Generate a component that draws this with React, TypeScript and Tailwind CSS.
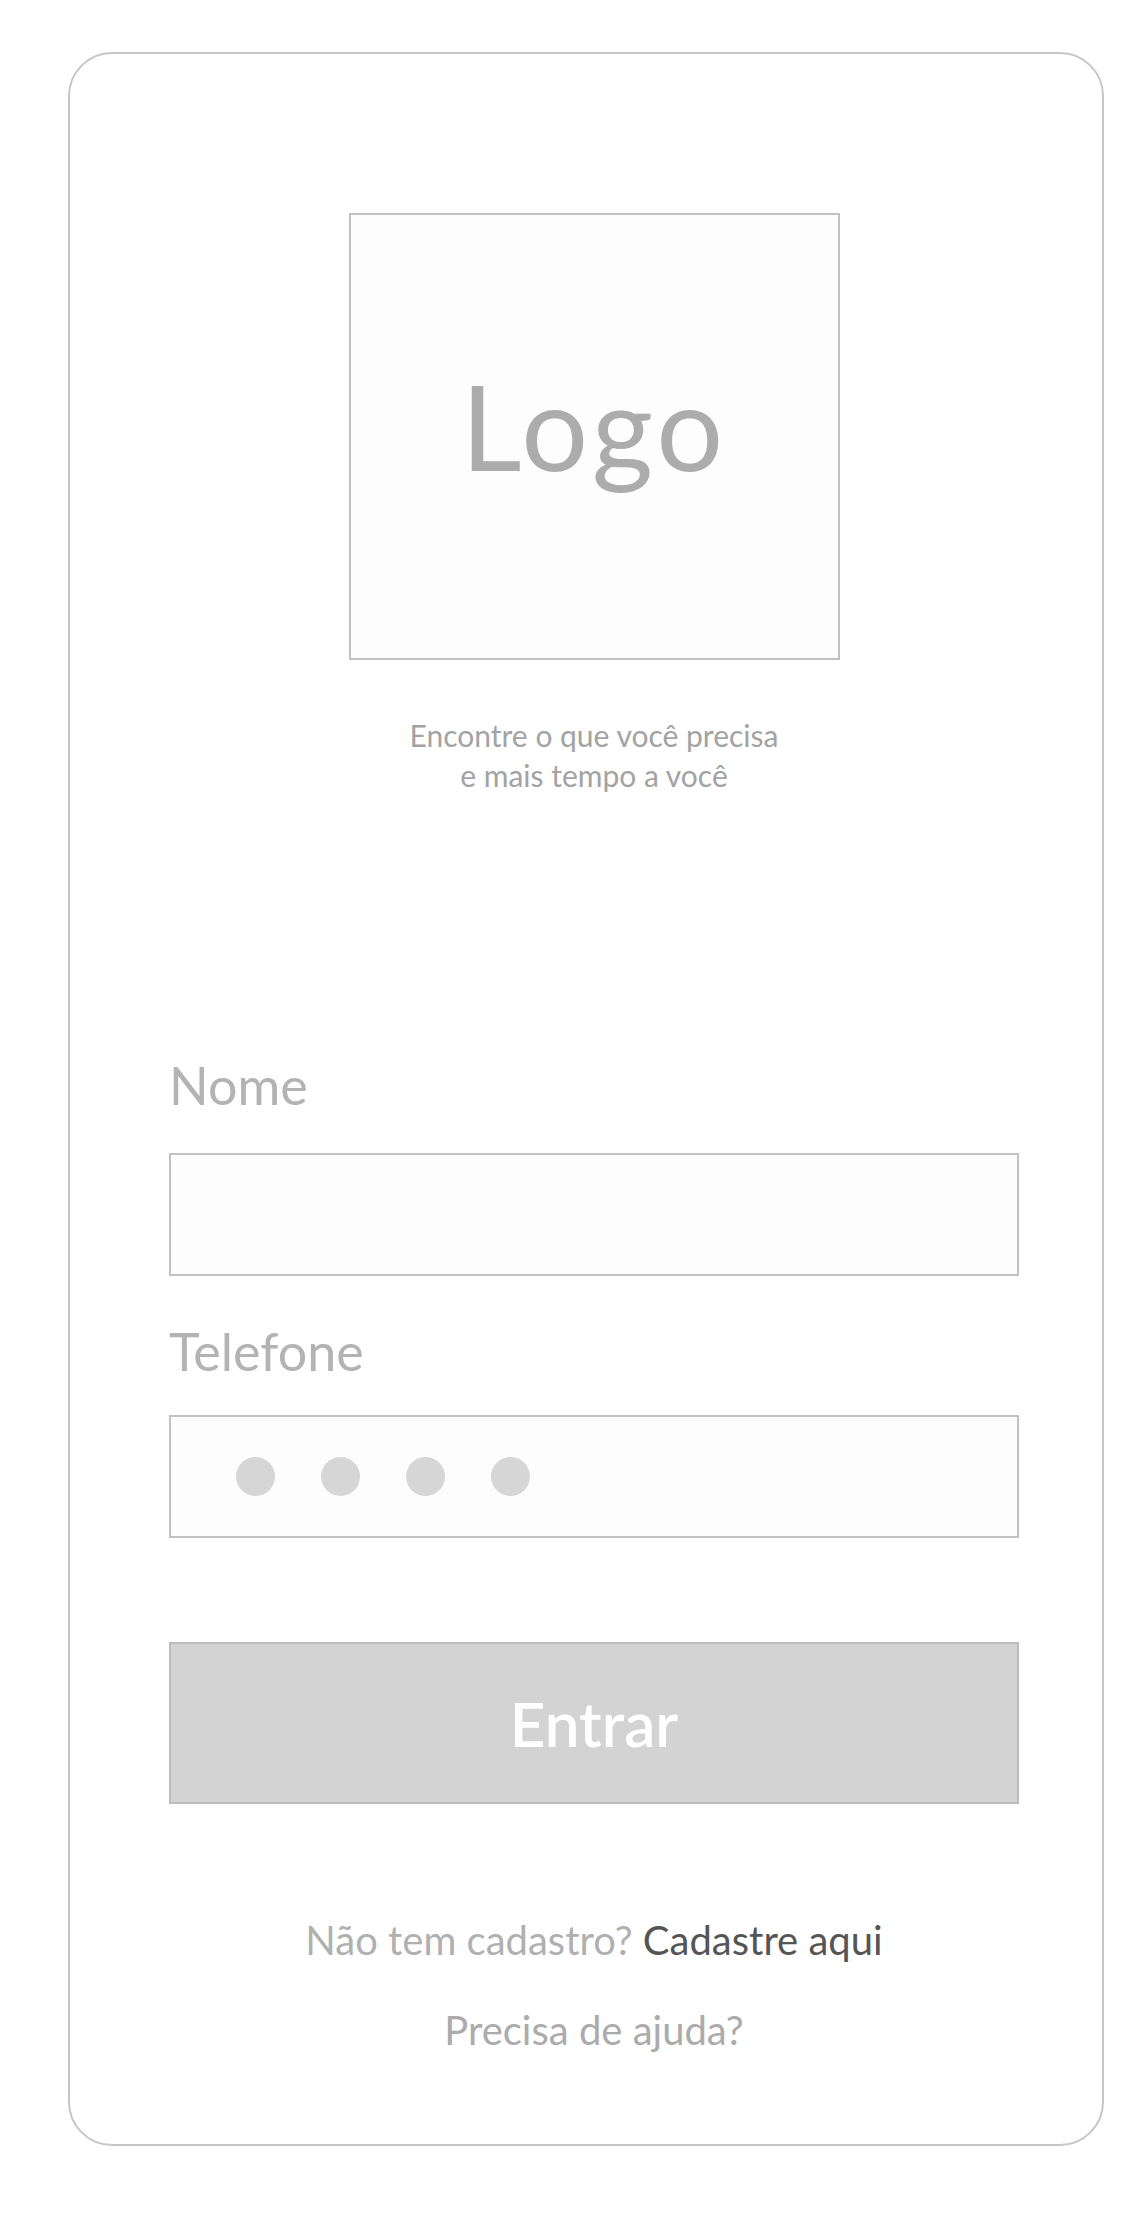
import React from 'react';

const Dots: React.FC<{ count: number }> = ({ count }) => (
  <div className="flex items-center gap-[46px]">
    {Array.from({ length: count }).map((_, i) => (
      <span key={i} className="block w-[39px] h-[39px] rounded-full bg-[#d6d6d6]" />
    ))}
  </div>
);

export default function App() {
  return (
    <div className="min-h-[2214px] bg-white pt-[52px] pl-[68px] font-['Lato',sans-serif]">
      <div className="w-[1036px] h-[2094px] rounded-[44px] border-2 border-[#c6c6c6] pl-[99px] pr-[83px] pt-[159px] flex flex-col items-center">
        {/* logo placeholder */}
        <div className="w-[491px] h-[447px] border-2 border-[#c2c2c2] bg-[#fdfdfd] flex items-center justify-center pb-[22px]">
          <span className="text-[118px] leading-none tracking-[4px] text-[#acacac]">Logo</span>
        </div>

        <p className="mt-[55px] text-[30px] leading-[40px] text-center text-[#a3a3a3]">
          Encontre o que você precisa
          <br />
          e mais tempo a você
        </p>

        <form className="w-full mt-[264px] flex flex-col" onSubmit={(e) => e.preventDefault()}>
          <label className="text-[52px] leading-[52px] text-[#b3b3b3]">Nome</label>
          <div className="mt-[42px] h-[123px] border-2 border-[#c2c2c2] bg-[#fdfdfd]" />

          <label className="mt-[49px] text-[52px] leading-[52px] text-[#b3b3b3]">Telefone</label>
          <div className="mt-[38px] h-[123px] border-2 border-[#c2c2c2] bg-[#fdfdfd] flex items-center pl-[65px]">
            <Dots count={4} />
          </div>

          <button
            type="submit"
            className="mt-[104px] h-[162px] border-2 border-[#bcbcbc] bg-[#d3d3d3] flex items-center justify-center"
          >
            <span className="text-[62px] leading-none font-semibold text-white">Entrar</span>
          </button>
        </form>

        <p className="mt-[116px] text-[40px] leading-[40px] text-[#b0b0b0]">
          Não tem cadastro? <a className="text-[#555555]">Cadastre aqui</a>
        </p>
        <p className="mt-[50px] text-[40px] leading-[40px] text-[#ababab]">Precisa de ajuda?</p>
      </div>
    </div>
  );
}
